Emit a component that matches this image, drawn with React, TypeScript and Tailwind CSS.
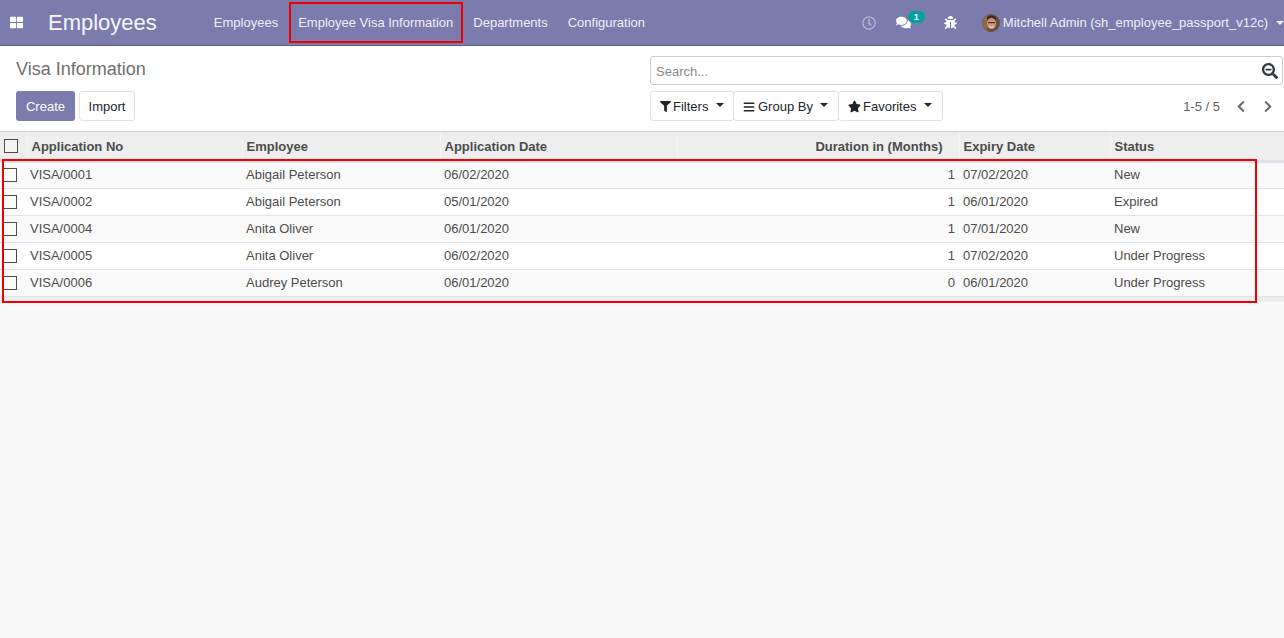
import { FaThLarge, FaRegClock, FaComments, FaBug, FaSearchMinus, FaFilter, FaBars, FaStar, FaChevronLeft, FaChevronRight } from "react-icons/fa";

const rows = [
  ["VISA/0001", "Abigail Peterson", "06/02/2020", "1", "07/02/2020", "New"],
  ["VISA/0002", "Abigail Peterson", "05/01/2020", "1", "06/01/2020", "Expired"],
  ["VISA/0004", "Anita Oliver", "06/01/2020", "1", "07/01/2020", "New"],
  ["VISA/0005", "Anita Oliver", "06/02/2020", "1", "07/02/2020", "Under Progress"],
  ["VISA/0006", "Audrey Peterson", "06/01/2020", "0", "06/01/2020", "Under Progress"],
];

function Caret() {
  return <span className="ml-[8px] mb-[4px] inline-block w-0 h-0 border-x-[4px] border-x-transparent border-t-[4px] border-t-[#212529]" />;
}

function Avatar() {
  return (
    <svg width="18" height="18" viewBox="0 0 18 18" className="rounded-full mr-[3px]">
      <rect width="18" height="18" fill="#6b5040" />
      <rect x="0" y="0" width="5" height="18" fill="#8a6a50" />
      <ellipse cx="9.5" cy="9.5" rx="4.5" ry="5.5" fill="#c9977c" />
      <path d="M5 6 Q9 1 14 6 L14 3 Q9 0 5 3 Z" fill="#3a2a20" />
      <rect x="6" y="8" width="7" height="1.2" fill="#4a3028" />
      <path d="M7 12.5 Q9.5 14 12 12.5" stroke="#f3e3d8" strokeWidth="1" fill="none" />
    </svg>
  );
}

export default function App() {
  return (
    <div className="relative w-[1284px] h-[638px] overflow-hidden bg-[#f9f9f9] text-[13px] text-[#4c4c4c] font-['Liberation_Sans',Arial,sans-serif]">
      {/* Navbar */}
      <header className="h-[46px] bg-[#7c7bad] border-b border-[#5e5d90] flex items-center text-white">
        <FaThLarge className="ml-[10px] w-[13px] h-[13px] text-white" />
        <span className="ml-[25px] text-[22px] leading-[26px] text-[#f4f6fb]">Employees</span>
        <nav className="ml-[57px] flex items-center text-[#eff0f6]">
          <span>Employees</span>
          <span className="ml-[20px]">Employee Visa Information</span>
          <span className="ml-[20px]">Departments</span>
          <span className="ml-[20px]">Configuration</span>
        </nav>
        <div className="ml-auto flex items-center text-[#eff0f6]">
          <FaRegClock className="w-[14px] h-[14px] text-[#b8b8d4]" />
          <span className="relative ml-[20px] mr-[27px]">
            <FaComments className="w-[15px] h-[15px] text-white" />
            <span className="absolute left-[12px] top-[-4px] w-[17px] h-[12px] rounded-[6px] bg-[#00a09d] text-white text-[9px] leading-[12px] text-center font-bold">1</span>
          </span>
          <FaBug className="ml-[6px] w-[13px] h-[13px] text-white" />
          <span className="ml-[25px] flex items-center">
            <Avatar />
            <span>Mitchell Admin (sh_employee_passport_v12c)</span>
            <span className="ml-[8px] inline-block w-0 h-0 border-x-[4px] border-x-transparent border-t-[4px] border-t-[#eff0f6]" />
          </span>
        </div>
      </header>

      {/* Control panel */}
      <section className="h-[86px] bg-white border-b border-[#cccccc] flex pl-[16px] pr-[1px]">
        <div className="w-[634px] shrink-0 flex flex-col">
          <h1 className="mt-[11px] text-[18px] leading-[24px] text-[#6f6f6f]">Visa Information</h1>
          <div className="mt-[10px] flex gap-[4px]">
            <button className="h-[30px] w-[59px] pt-[1px] rounded-[3px] bg-[#7c7bad] text-white">Create</button>
            <button className="h-[30px] w-[56px] pt-[1px] rounded-[3px] bg-white border border-[#dee2e6] text-[#212529]">Import</button>
          </div>
        </div>
        <div className="flex-1 flex flex-col">
          <div className="mt-[10px] h-[29px] rounded-[3px] border border-[#ccc] flex items-center pl-[5px] pr-[4px] bg-white">
            <span className="pt-[2px] text-[#8a8a8a]">Search...</span>
            <FaSearchMinus className="ml-auto mt-[1px] w-[16px] h-[16px] text-[#2d3a40]" />
          </div>
          <div className="mt-[6px] flex items-center text-[#212529]">
            <button className="h-[30px] w-[84px] rounded-[3px] border border-[#dee2e6] flex items-center pl-[9px] pt-[1px]">
              <FaFilter className="w-[11px] h-[11px] mr-[2px]" />Filters<Caret />
            </button>
            <button className="h-[30px] w-[106px] -ml-[1px] rounded-[3px] border border-[#dee2e6] flex items-center pl-[9px] pt-[1px]">
              <FaBars className="w-[12px] h-[12px] mr-[3px]" />Group By
              <span className="ml-[7px] mb-[4px] inline-block w-0 h-0 border-x-[4px] border-x-transparent border-t-[4px] border-t-[#212529]" />
            </button>
            <button className="h-[30px] w-[105px] -ml-[1px] rounded-[3px] border border-[#dee2e6] flex items-center pl-[9px] pt-[1px]">
              <FaStar className="w-[13px] h-[13px] mr-[2px]" />Favorites<Caret />
            </button>
            <div className="ml-auto flex items-center pt-[1px] text-[#5f5f5f]">
              <span>1-5 / 5</span>
              <FaChevronLeft className="ml-[16px] w-[10px] h-[13px] text-[#666]" />
              <FaChevronRight className="ml-[17px] mr-[10px] w-[10px] h-[13px] text-[#666]" />
            </div>
          </div>
        </div>
      </section>

      {/* List table */}
      <table className="w-[1284px] table-fixed border-collapse">
        <colgroup>
          <col className="w-[27px]" />
          <col className="w-[215px]" />
          <col className="w-[198px]" />
          <col className="w-[237px]" />
          <col className="w-[282px]" />
          <col className="w-[151px]" />
          <col className="w-[174px]" />
        </colgroup>
        <thead>
          <tr className="h-[29px] bg-[#eeeeee] border-b-[3px] border-[#dfe2e8] font-bold text-[#4c4c4c] text-left">
            <th className="p-0 pt-[1px] border-r border-[#f5f5f5]">
              <span className="block ml-[4px] w-[14px] h-[14px] border border-[#4c4c4c] bg-[#f4f4f4]" />
            </th>
            <th className="px-[4px] pt-[1px] border-r border-[#f5f5f5]">Application No</th>
            <th className="px-[4px] pt-[1px] border-r border-[#f5f5f5]">Employee</th>
            <th className="px-[4px] pt-[1px] border-r border-[#f5f5f5]">Application Date</th>
            <th className="pl-[4px] pr-[16px] pt-[1px] text-right border-r border-[#f5f5f5]">Duration in (Months)</th>
            <th className="px-[4px] pt-[1px] border-r border-[#f5f5f5]">Expiry Date</th>
            <th className="px-[4px] pt-[1px]">Status</th>
          </tr>
        </thead>
        <tbody>
          {rows.map((r) => (
            <tr key={r[0]} className="h-[27px] border-b border-[#dfe2e8] odd:bg-[#fafafa] even:bg-white">
              <td className="p-0">
                <span className="block ml-[3px] w-[14px] h-[14px] border border-[#4c4c4c] bg-white" />
              </td>
              <td className="px-[3px]">{r[0]}</td>
              <td className="px-[4px]">{r[1]}</td>
              <td className="px-[4px]">{r[2]}</td>
              <td className="pl-[4px] pr-[4px] text-right">{r[3]}</td>
              <td className="px-[4px]">{r[4]}</td>
              <td className="px-[4px]">{r[5]}</td>
            </tr>
          ))}
        </tbody>
        <tfoot>
          <tr className="h-[6px] bg-[#eeeeee]"><td colSpan={7} className="p-0" /></tr>
        </tfoot>
      </table>

      {/* Annotation boxes */}
      <div className="absolute left-[289px] top-[2px] w-[174px] h-[41px] border-2 border-[#f00000]" />
      <div className="absolute left-[2px] top-[159px] w-[1255px] h-[144px] border-2 border-[#f00000]" />
    </div>
  );
}
